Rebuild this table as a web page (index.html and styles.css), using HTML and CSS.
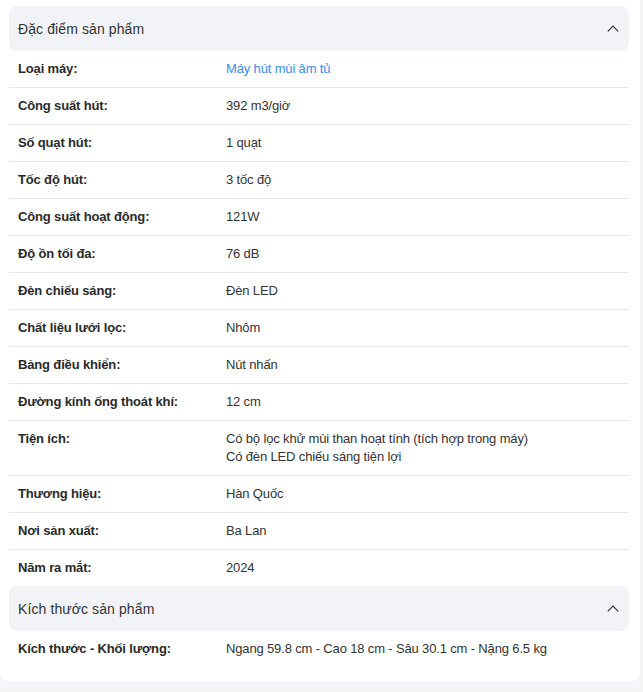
FILE: index.html
```html
<!DOCTYPE html>
<html lang="vi">
<head>
<meta charset="utf-8">
<link rel="stylesheet" href="styles.css">
</head>
<body>
<div class="card">
  <div class="section-head">
    <span>Đặc điểm sản phẩm</span>
    <svg class="chev" width="12" height="7" viewBox="0 0 12 7"><path d="M0.8 6.4 L6 1.2 L11.2 6.4" fill="none" stroke="#333" stroke-width="1.2"/></svg>
  </div>
  <div class="specs">
    <div class="row"><div class="label">Loại máy:</div><div class="value link">Máy hút mùi âm tủ</div></div>
    <div class="row"><div class="label">Công suất hút:</div><div class="value">392 m3/giờ</div></div>
    <div class="row"><div class="label">Số quạt hút:</div><div class="value">1 quạt</div></div>
    <div class="row"><div class="label">Tốc độ hút:</div><div class="value">3 tốc độ</div></div>
    <div class="row"><div class="label">Công suất hoạt động:</div><div class="value">121W</div></div>
    <div class="row"><div class="label">Độ ồn tối đa:</div><div class="value">76 dB</div></div>
    <div class="row"><div class="label">Đèn chiếu sáng:</div><div class="value">Đèn LED</div></div>
    <div class="row"><div class="label">Chất liệu lưới lọc:</div><div class="value">Nhôm</div></div>
    <div class="row"><div class="label">Bảng điều khiển:</div><div class="value">Nút nhấn</div></div>
    <div class="row"><div class="label">Đường kính ống thoát khí:</div><div class="value">12 cm</div></div>
    <div class="row"><div class="label">Tiện ích:</div><div class="value">Có bộ lọc khử mùi than hoạt tính (tích hợp trong máy)<br>Có đèn LED chiếu sáng tiện lợi</div></div>
    <div class="row"><div class="label">Thương hiệu:</div><div class="value">Hàn Quốc</div></div>
    <div class="row"><div class="label">Nơi sản xuất:</div><div class="value">Ba Lan</div></div>
    <div class="row last"><div class="label">Năm ra mắt:</div><div class="value">2024</div></div>
  </div>
  <div class="section-head">
    <span>Kích thước sản phẩm</span>
    <svg class="chev" width="12" height="7" viewBox="0 0 12 7"><path d="M0.8 6.4 L6 1.2 L11.2 6.4" fill="none" stroke="#333" stroke-width="1.2"/></svg>
  </div>
  <div class="specs">
    <div class="row last"><div class="label">Kích thước - Khối lượng:</div><div class="value">Ngang 59.8 cm - Cao 18 cm - Sâu 30.1 cm - Nặng 6.5 kg</div></div>
  </div>
</div>
</body>
</html>
```
FILE: styles.css
```css
* { box-sizing: border-box; }
html, body { margin: 0; padding: 0; }
body {
  background: #f4f5f7;
  font-family: "Liberation Sans", Arial, sans-serif;
  color: #333;
  width: 643px;
  height: 692px;
}
.card {
  background: #fff;
  padding: 6px 11px 14px 9px;
  border-radius: 0 0 8px 8px;
  width: 640px;
}
.section-head {
  background: #f2f3f7;
  border-radius: 8px;
  height: 45px;
  display: flex;
  align-items: center;
  justify-content: space-between;
  padding: 0 10px 0 9px;
  font-size: 14px;
  letter-spacing: 0.1px;
  color: #333;
}
.chev { display: block; }
.row {
  display: flex;
  border-bottom: 1px solid #e8e8e8;
  padding: 9px 0 9px 9px;
  font-size: 13px;
  line-height: 18px;
}
.row.last { border-bottom: none; }
.label {
  width: 208px;
  flex: none;
  font-weight: bold;
  color: #2a2a2a;
  letter-spacing: -0.15px;
}
.value { color: #333; letter-spacing: -0.15px; }
.value.link { color: #3a8cf0; }
```
